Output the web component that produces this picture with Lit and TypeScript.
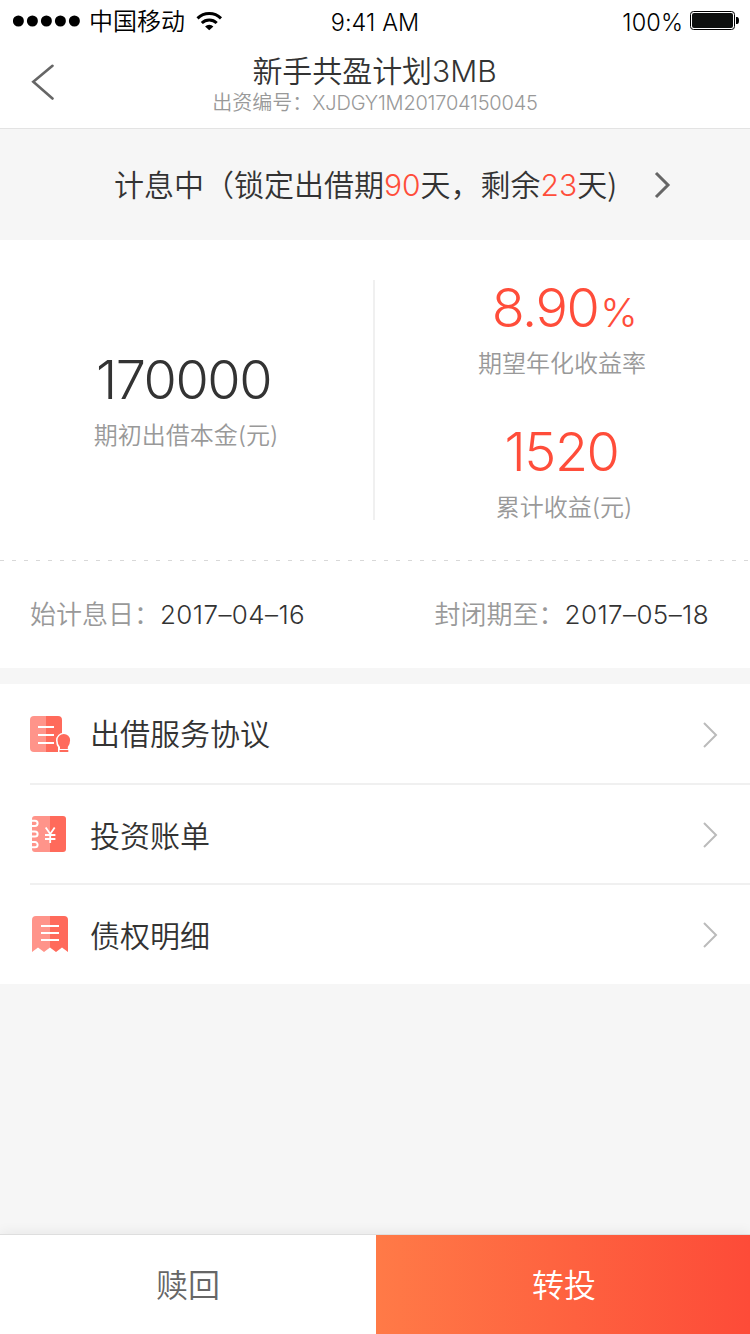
import { LitElement, html, svg, css } from "lit";
import { customElement } from "lit/decorators.js";

const chevron = (cls: string) => html`<svg class=${cls} viewBox="0 0 18 28" width="18" height="28">
  <path d="M3 2 L15 14 L3 26" fill="none" stroke="currentColor" />
</svg>`;

const agreementIcon = svg`
  <path d="M4 0H16V36H4Q0 36 0 32V4Q0 0 4 0Z" fill="#ff948a"/>
  <path d="M16 0H28Q32 0 32 4V18L28 27V36H16Z" fill="#ff6a5b"/>
  <path d="M8 11H24M8 19H24M8 27H24" stroke="#fff" stroke-width="2"/>
  <path d="M28.5 36V32Q26 29 26 24.5A7.8 7.8 0 0 1 41.6 24.5Q41.6 29 39 32V36Z" fill="#fff"/>
  <path d="M30 33V31Q27.5 28 27.5 24.3A6.3 6.3 0 0 1 40.1 24.3Q40.1 28 37.8 31V33Z" fill="#ff6a5b"/>
  <path d="M29.5 35H38.3" stroke="#ff6a5b" stroke-width="2"/><path d="M29.5 33.5H38.3" stroke="#fff" stroke-width="1"/>`;

const billIcon = svg`
  <path d="M5 0H20V36H5Q2 36 2 33V3Q2 0 5 0Z" fill="#ff948a"/>
  <path d="M20 0H33Q36 0 36 3V33Q36 36 33 36H20Z" fill="#ff6a5b"/>
  <path d="M0 4.7H5A2.6 2.6 0 0 1 5 9.9H0M0 15.4H5A2.6 2.6 0 0 1 5 20.6H0M0 26.1H5A2.6 2.6 0 0 1 5 31.3H0" fill="none" stroke="#fff" stroke-width="2"/>
  <path d="M15.7 11.5L20.2 18L24.7 11.5M20.2 18V27M15 19H25.4M15 23H25.4" fill="none" stroke="#fff" stroke-width="1.8"/>`;

const detailIcon = svg`
  <path d="M6 0H20V31.5L14 36L8 31.5L2 36V4Q2 0 6 0Z" fill="#ff948a"/>
  <path d="M20 0H34Q38 0 38 4V36L32 31.5L26 36L20 31.5Z" fill="#ff6a5b"/>
  <path d="M11 10H29M11 17H29M11 24H29" stroke="#fff" stroke-width="2"/>`;

@customElement("app-root")
export class AppRoot extends LitElement {
  static styles = css`
    :host { display: block; width: 750px; height: 1334px; background: #f6f6f6; color: #333;
      font-family: Inter, "Noto Sans CJK SC DemiLight", "Noto Sans CJK SC", sans-serif; font-weight: 350; overflow: hidden; }
    * { box-sizing: border-box; }
    .page { display: flex; flex-direction: column; height: 1334px; white-space: nowrap; }
    .status { height: 40px; background: #fff; color: #000; display: grid; grid-template-columns: 1fr auto 1fr;
      align-items: center; padding: 4px 11px 0 13px; font-size: 23.5px; line-height: 36px; }
    .carrier { display: flex; align-items: center; height: 36px; margin-top: -3px; font-size: 24px; }
    .carrier-name { padding-top: 2px; }
    .dots { margin-right: 9px; }
    .wifi { margin-left: 11px; }
    .clock { padding: 1px 2px 0 0; letter-spacing: 0.1px; }
    .power { display: flex; justify-content: flex-end; align-items: center; padding-top: 1px; letter-spacing: 0.1px; }
    .battery { margin: -5px 0 0 7px; }
    .nav { height: 89px; background: #fff; border-bottom: 1px solid #e3e3e3; display: grid; grid-template-columns: 100px 1fr 100px; }
    .back { margin: 23px 0 0 30px; }
    .titles { display: flex; flex-direction: column; align-items: center; padding-top: 11px; }
    .title { font-size: 30px; line-height: 40px; margin-right: 1px; letter-spacing: -0.05px; }
    .serial { font-size: 20px; line-height: 24px; color: #999; }
    .serial-code { letter-spacing: -0.22px; }
    .lock { height: 111px; display: flex; align-items: center; padding: 1px 79px 0 114px; justify-content: space-between; font-size: 30px; }
    .lock-text { padding-bottom: 4px; }
    .paren { font-family: "Noto Sans CJK SC DemiLight", "Noto Sans CJK SC", sans-serif; }
    .red { color: #ff4d3a; }
    .chev-dark { color: #666; stroke-width: 3; }
    .chev { color: #bbb; stroke-width: 2; margin-top: 2px; }
    .summary { height: 320px; background: #fff; display: grid; grid-template-columns: 373px 2px 375px; grid-template-rows: 240px; padding: 40px 0; }
    .rule { background: #f0f0f0; }
    .left { display: flex; flex-direction: column; align-items: center; padding: 68px 1px 0 0; }
    .left .num { margin-right: 5px; }
    .right { display: flex; flex-direction: column; align-items: center; }
    .stat { display: flex; flex: none; flex-direction: column; align-items: center; height: 144px; }
    .num { font-size: 54px; line-height: 64px; letter-spacing: -1.5px; font-weight: 300; }
    .right .num { margin-top: -4px; }
    .rate { margin-left: 3px; }
    .total { margin-right: 2px; }
    .pct { font-size: 40px; line-height: 0; margin-left: 2px; font-weight: 350; }
    .label { font-size: 24px; line-height: 32px; color: #999; margin-top: 8px; }
    .rate-label { margin-right: 1px; }
    .total-label { margin-left: 3px; }
    .dash { height: 1px; background: repeating-linear-gradient(90deg, #d8d8d8 0 4px, #fff 4px 12px); }
    .dates { height: 107px; background: #fff; display: flex; justify-content: space-between; padding: 0 41px 0 30px; line-height: 108px; font-size: 26px; }
    .date-label { color: #999; }
    .date { letter-spacing: 0.4px; }
    .list { margin-top: 16px; height: 300px; padding-top: 1px; overflow: hidden; background: #fff; }
    .row { height: 100px; display: flex; align-items: center; padding-right: 31px; margin-left: 30px; border-bottom: 2px solid #f0f0f0; font-size: 30px; }
    .row:last-child { border-bottom-color: transparent; }
    .row-icon { margin-right: 18px; }
    .row-text { flex: 1; padding-bottom: 1px; }
    .row:first-child .row-text { padding-bottom: 5px; }
    .actions { margin-top: auto; height: 100px; display: grid; grid-template-columns: 376px 374px; text-align: center;
      font-size: 32px; line-height: 101px; box-shadow: 0 -2px 12px rgba(0,0,0,.06); border-top: 1px solid #dedede; }
    .redeem, .reinvest { height: 99px; }
    .redeem { background: #fff; color: #666; }
    .reinvest { color: #fff; padding-left: 2px; background: linear-gradient(90deg, #ff7a47, #fd4b38); }
  `;

  render() {
    const rows = [
      { icon: agreementIcon, text: "出借服务协议" },
      { icon: billIcon, text: "投资账单" },
      { icon: detailIcon, text: "债权明细" },
    ];
    return html`<div class="page">
      <div class="status">
        <div class="carrier">
          <svg class="dots" width="67" height="12" viewBox="0 0 67 12">${[5.4, 19.4, 33.4, 47.4, 61.4].map((x) => svg`<circle cx=${x} cy="6" r="5.5"/>`)}</svg>
          <span class="carrier-name">中国移动</span>
          <svg class="wifi" width="27" height="20" viewBox="0 0 27 20" fill="none" stroke="#000" stroke-width="3">
            <path d="M1.5 7.3A17 17 0 0 1 25 7.3"/><path d="M5.8 12A10.7 10.7 0 0 1 20.7 12"/>
            <path d="M9.1 15.4A6.2 6.2 0 0 1 17.4 15.4L13.25 19.2Z" fill="#000" stroke="none"/>
          </svg>
        </div>
        <div class="clock">9:41 AM</div>
        <div class="power"><span>100%</span>
          <svg class="battery" width="49" height="19" viewBox="0 0 49 19">
            <rect x=".5" y=".5" width="44" height="18" rx="3" fill="#fff" stroke="#000"/>
            <rect x="2" y="2" width="41" height="15" rx="2" fill="#0d0f0e"/>
            <path d="M46 6H47Q49 6 49 9.5T47 13H46Z"/>
          </svg>
        </div>
      </div>
      <div class="nav">
        <svg class="back" width="24" height="38" viewBox="0 0 24 38"><path d="M22.5 2.8L3.3 18.8L22.5 35.5" fill="none" stroke="#666" stroke-width="2.6" stroke-linecap="round"/></svg>
        <div class="titles">
          <div class="title">新手共盈计划3MB</div>
          <div class="serial"><span class="serial-name">出资编号：</span><span class="serial-code">XJDGY1M201704150045</span></div>
        </div>
      </div>
      <div class="lock">
        <div class="lock-text">计息中（锁定出借期<span class="red">90</span>天，剩余<span class="red">23</span>天<span class="paren">)</span></div>
        ${chevron("chev-dark")}
      </div>
      <div class="summary">
        <div class="left"><div class="num">170000</div><div class="label">期初出借本金(元)</div></div>
        <div class="rule"></div>
        <div class="right">
          <div class="stat"><div class="num red rate">8.90<span class="pct">%</span></div><div class="label rate-label">期望年化收益率</div></div>
          <div class="stat"><div class="num red total">1520</div><div class="label total-label">累计收益(元)</div></div>
        </div>
      </div>
      <div class="dash"></div>
      <div class="dates">
        <div><span class="date-label">始计息日：</span><span class="date">2017–04–16</span></div>
        <div><span class="date-label">封闭期至：</span><span class="date">2017–05–18</span></div>
      </div>
      <div class="list">
        ${rows.map((r) => html`<div class="row">
          <svg class="row-icon" width="42" height="36" viewBox="0 0 42 36">${r.icon}</svg>
          <span class="row-text">${r.text}</span>${chevron("chev")}
        </div>`)}
      </div>
      <div class="actions"><div class="redeem">赎回</div><div class="reinvest">转投</div></div>
    </div>`;
  }
}
